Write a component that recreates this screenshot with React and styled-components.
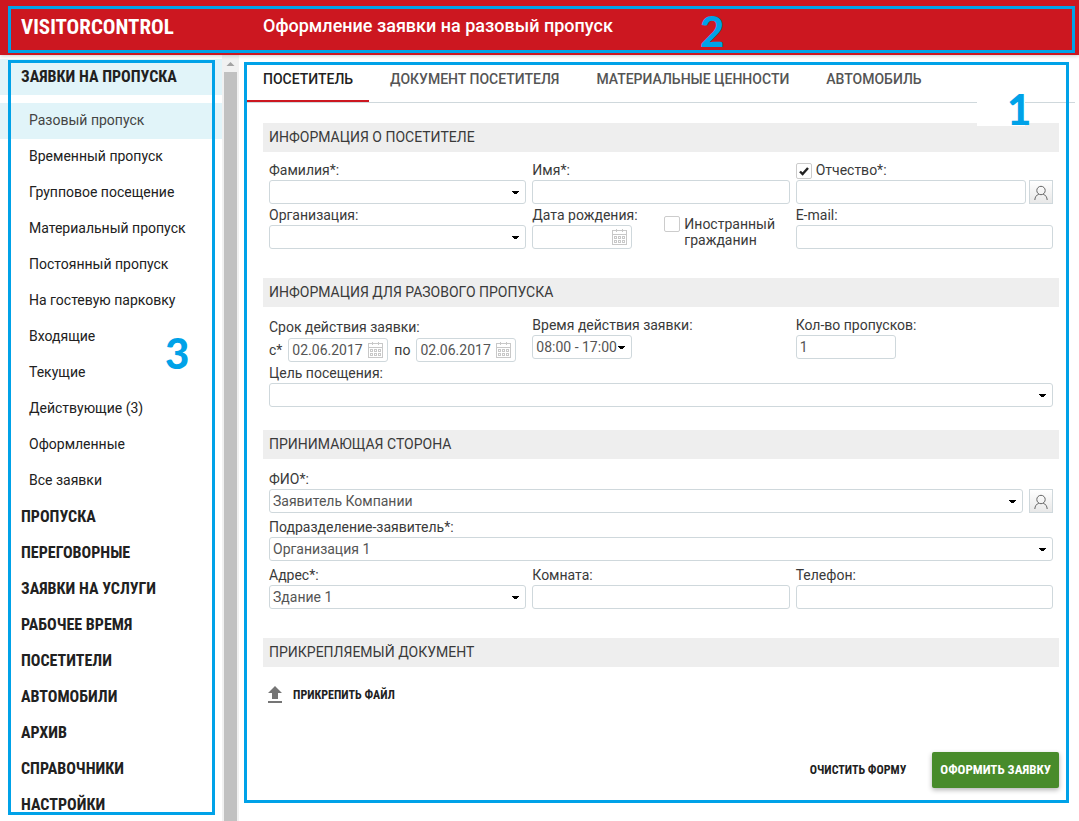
import React, { useState } from 'react';
import styled, { createGlobalStyle } from 'styled-components';

const GlobalStyle = createGlobalStyle`
  * {
    box-sizing: border-box;
  }

  body {
    margin: 0;
    background: #fff;
    color: #3a3a3a;
    font: 14px/20px Roboto, sans-serif;
  }

  button, input, select {
    font: inherit;
    color: inherit;
  }
`;

const condensed = '"Roboto Condensed", Roboto, sans-serif';

const Page = styled.div`
  display: flex;
  flex-direction: column;
  height: 100vh;
  overflow: hidden;
`;

const Header = styled.header`
  position: relative;
  z-index: 1;
  display: flex;
  align-items: center;
  flex: none;
  height: 55px;
  padding: 0 21px 2px;
  background: #cc1720;
  color: #fff;
  box-shadow: 0 1px 4px rgba(0, 0, 0, 0.2);
`;

const Logo = styled.a`
  width: 242px;
  color: inherit;
  font: 700 21px/24px ${condensed};
  text-decoration: none;
`;

const Title = styled.h1`
  margin: 0;
  padding-bottom: 2px;
  font-size: 18px;
  line-height: 24px;
  font-weight: 500;
`;

const Body = styled.div`
  display: flex;
  flex: 1;
  min-height: 0;
`;

const Sidebar = styled.nav`
  position: relative;
  flex: none;
  width: 222px;
  padding-top: 4px;
  overflow: hidden;
`;

const Group = styled.a`
  display: block;
  padding: 0 21px;
  color: #212121;
  background: ${({ $active }) => ($active ? '#e1f4f9' : 'transparent')};
  font: 700 16px/36px ${condensed};
  text-decoration: none;
`;

const SubMenu = styled.div`
  padding-top: 8px;
`;

const SubItem = styled.a`
  display: block;
  padding: 0 29px 2px;
  color: ${({ $active }) => ($active ? '#444' : '#212121')};
  background: ${({ $active }) => ($active ? '#e1f4f9' : 'transparent')};
  line-height: 34px;
  text-decoration: none;
`;

const ScrollTrack = styled.div`
  display: flex;
  flex-direction: column;
  flex: none;
  width: 17px;
  padding: 0 2px;
  background: #f1f1f1;

  svg {
    flex: none;
    margin: 6px 2px 5px;
  }
`;

const ScrollThumb = styled.div`
  flex: 1;
  background: #c1c1c1;
`;

const Main = styled.main`
  position: relative;
  flex: 1;
  min-width: 0;
  padding: 0 20px 0 24px;
`;

const Tabs = styled.div`
  display: flex;
  gap: 5px;
  margin: 0 -16px 20px;
  border-bottom: 1px solid #cfd8dc;
`;

const Tab = styled.button`
  height: 47px;
  padding: 0 16px;
  border: 0;
  border-top: 2px solid transparent;
  border-bottom: 2px solid ${({ $active }) => ($active ? '#cc1720' : 'transparent')};
  background: none;
  color: ${({ $active }) => ($active ? '#212121' : '#555')};
  font-weight: 500;
  white-space: nowrap;
`;

const Section = styled.section`
  margin-bottom: ${({ $tight }) => ($tight ? '23px' : '29px')};
`;

const SectionTitle = styled.h2`
  margin: 0;
  padding: 0 6px;
  background: #eee;
  font-size: 14px;
  line-height: 29px;
  font-weight: 400;
`;

const Grid = styled.div`
  display: grid;
  grid-template-columns: repeat(3, minmax(0, 1fr));
  gap: ${({ $loose }) => ($loose ? '4px 6px' : '1px 6px')};
  align-items: start;
  padding: ${({ $loose }) => ($loose ? '10px 6px 0' : '8px 6px 0')};
`;

const Cell = styled.div`
  display: flex;
  flex-direction: column;
  grid-column: ${({ $wide }) => ($wide ? '1 / -1' : 'auto')};
  gap: ${({ $lowered }) => ($lowered ? '1px' : '0')};
  width: ${({ $short }) => ($short ? '100px' : 'auto')};
  padding-top: ${({ $lowered }) => ($lowered ? '2px' : '0')};
`;

const Split = styled.div`
  display: flex;
  gap: 32px;
`;

const Label = styled.label`
  display: flex;
  align-items: center;
  gap: 4px;
  white-space: nowrap;
`;

const Line = styled.div`
  display: flex;
  align-items: center;
  gap: ${({ $gap }) => $gap || 6}px;
`;

const Control = styled.div`
  position: relative;
  flex: ${({ $short }) => ($short ? 'none' : '1 1 auto')};
  width: ${({ $short }) => ($short ? '100px' : 'auto')};
  height: 24px;

  > svg {
    position: absolute;
    top: 11px;
    right: 7px;
    pointer-events: none;
  }
`;

const Input = styled.input`
  display: block;
  width: 100%;
  height: 24px;
  padding: 0 3px;
  border: 1px solid #cfd8dc;
  border-radius: 3px;
  background: #fff;
  color: #555;
  outline: none;
`;

const SelectBox = styled(Input).attrs({ as: 'select' })`
  appearance: none;
`;

const CalendarButton = styled.button`
  position: absolute;
  top: 4px;
  right: 5px;
  display: flex;
  padding: 0;
  border: 0;
  background: none;
`;

const UserButton = styled.button`
  display: flex;
  align-items: center;
  justify-content: center;
  flex: none;
  width: 24px;
  height: 24px;
  padding: 2px 1px 0 0;
  border: 1px solid #cfd8dc;
  background: linear-gradient(#fff, #e8e8e8);
`;

const Check = styled.input`
  appearance: none;
  flex: none;
  width: 16px;
  height: 16px;
  margin: 0;
  border: 1px solid #ccc;
  border-radius: 2px;
  background: #fff;
`;

const CheckWrap = styled.span`
  position: relative;
  display: flex;
  align-self: flex-start;

  svg {
    position: absolute;
    top: 4px;
    left: 3px;
    pointer-events: none;
  }
`;

const PatronymicLabel = styled(Label)`
  ${CheckWrap} {
    align-self: flex-end;
    padding-bottom: 1px;
  }
`;

const ForeignLabel = styled.label`
  display: flex;
  gap: 4px;
  padding-top: 11px;
  line-height: 16px;
`;

const AttachButton = styled.button`
  display: flex;
  align-items: center;
  gap: 6px;
  margin-top: 16px;
  padding: 0;
  border: 0;
  background: none;
  color: #212121;
  font: 700 12px/24px ${condensed};
`;

const Actions = styled.div`
  display: flex;
  justify-content: flex-end;
  gap: 18px;
  margin-top: 45px;
`;

const ActionButton = styled.button`
  height: 36px;
  padding: 0 8px;
  border: 0;
  border-radius: 2px;
  background: ${({ $primary }) => ($primary ? '#488b2b' : 'none')};
  color: ${({ $primary }) => ($primary ? '#fff' : '#212121')};
  box-shadow: ${({ $primary }) => ($primary ? '0 2px 5px rgba(0, 0, 0, 0.3)' : 'none')};
  font: 700 ${({ $primary }) => ($primary ? '13px' : '12px')}/36px ${condensed};
  white-space: nowrap;
`;

// callout frames lying over the three page areas
const Frame = styled.div`
  position: absolute;
  inset: ${({ $inset }) => $inset};
  border: 3px solid #00a2e8;
  pointer-events: none;
`;

const Marker = styled.span`
  position: absolute;
  top: ${({ $top }) => $top}px;
  right: ${({ $right }) => $right}px;
  width: 24px;
  color: #00a2e8;
  font: 900 42px/34px Lato, sans-serif;
  text-align: center;
`;

const MarkerPatch = styled.div`
  position: absolute;
  top: 37px;
  right: 54px;
  width: 48px;
  height: 34px;
  background: #fff;
`;

const Caret = () => (
  <svg width="7" height="3" viewBox="0 0 7 3" shapeRendering="crispEdges" aria-hidden="true">
    <path d="M0 0h7v1H6v1H5v1H2V2H1V1H0z" fill="#000" />
  </svg>
);

const CalendarIcon = () => (
  <svg width="15" height="16" viewBox="0 0 15 16" fill="none" stroke="#c8c8c8" shapeRendering="crispEdges" aria-hidden="true">
    <path d="M.5 1.5h14v14H.5zM.5 5.5h14M4.5 0v3M10.5 0v3" />
    <path d="M2.5 7.5h2v2h-2zM6.5 7.5h2v2h-2zM10.5 7.5h2v2h-2zM2.5 11.5h2v2h-2zM6.5 11.5h2v2h-2zM10.5 11.5h2v2h-2z" />
  </svg>
);

const UserIcon = () => (
  <svg width="14" height="16" viewBox="0 0 14 16" fill="none" stroke="#666" aria-hidden="true">
    <circle cx="7" cy="5.5" r="4.2" />
    <path d="M.8 15c.2-3 1.7-5 4-5.8M13.2 15c-.2-3-1.7-5-4-5.8" />
  </svg>
);

const CheckIcon = () => (
  <svg width="10" height="9" viewBox="0 0 10 9" fill="none" stroke="#222" strokeWidth="2.4" aria-hidden="true">
    <path d="M1 4.5l2.6 2.6L9 1" />
  </svg>
);

const UploadIcon = () => (
  <svg width="24" height="24" viewBox="0 0 24 24" fill="#757575" aria-hidden="true">
    <path d="M9 16h6v-6h4l-7-7-7 7h4zM5 18h14v2H5z" />
  </svg>
);

const Select = ({ id, value = '', short }) => (
  <Control $short={short}>
    <SelectBox id={id} defaultValue={value}>
      <option value={value}>{value}</option>
    </SelectBox>
    <Caret />
  </Control>
);

const DateInput = ({ id, value }) => (
  <Control $short>
    <Input id={id} defaultValue={value} />
    <CalendarButton type="button" aria-label="Календарь"><CalendarIcon /></CalendarButton>
  </Control>
);

const Field = ({ id, label, wide, short, children }) => (
  <Cell $wide={wide} $short={short}>
    <Label htmlFor={id}>{label}</Label>
    {children}
  </Cell>
);

const CheckBox = ({ checked, onChange }) => (
  <CheckWrap>
    <Check type="checkbox" checked={checked} onChange={onChange} />
    {checked && <CheckIcon />}
  </CheckWrap>
);

const requests = [
  'Разовый пропуск',
  'Временный пропуск',
  'Групповое посещение',
  'Материальный пропуск',
  'Постоянный пропуск',
  'На гостевую парковку',
  'Входящие',
  'Текущие',
  'Действующие (3)',
  'Оформленные',
  'Все заявки',
];

const groups = [
  'ПРОПУСКА',
  'ПЕРЕГОВОРНЫЕ',
  'ЗАЯВКИ НА УСЛУГИ',
  'РАБОЧЕЕ ВРЕМЯ',
  'ПОСЕТИТЕЛИ',
  'АВТОМОБИЛИ',
  'АРХИВ',
  'СПРАВОЧНИКИ',
  'НАСТРОЙКИ',
];

const tabs = ['ПОСЕТИТЕЛЬ', 'ДОКУМЕНТ ПОСЕТИТЕЛЯ', 'МАТЕРИАЛЬНЫЕ ЦЕННОСТИ', 'АВТОМОБИЛЬ'];

const App = () => {
  const [tab, setTab] = useState(0);
  const [hasPatronymic, setHasPatronymic] = useState(true);
  const [foreign, setForeign] = useState(false);

  return (
    <Page>
      <GlobalStyle />
      <Header>
        <Logo href="#">VISITORCONTROL</Logo>
        <Title>Оформление заявки на разовый пропуск</Title>
        <Frame $inset="6px 4px 2px 8px" />
        <Marker $top={14} $right={355}>2</Marker>
      </Header>
      <Body>
        <Sidebar>
          <Group href="#" $active>ЗАЯВКИ НА ПРОПУСКА</Group>
          <SubMenu>
            {requests.map((name, i) => (
              <SubItem key={name} href="#" $active={i === 0}>{name}</SubItem>
            ))}
          </SubMenu>
          {groups.map((name) => <Group key={name} href="#">{name}</Group>)}
          <Frame $inset="5px 7px 6px 8px" />
          <Marker $top={281} $right={33}>3</Marker>
        </Sidebar>
        <ScrollTrack>
          <svg width="9" height="6" viewBox="0 0 9 6" fill="#a3a3a3" aria-hidden="true">
            <path d="M4.5 1L8.5 5h-8z" />
          </svg>
          <ScrollThumb />
        </ScrollTrack>
        <Main>
          <Tabs role="tablist">
            {tabs.map((name, i) => (
              <Tab key={name} role="tab" aria-selected={tab === i} $active={tab === i} onClick={() => setTab(i)}>
                {name}
              </Tab>
            ))}
          </Tabs>

          <Section>
            <SectionTitle>ИНФОРМАЦИЯ О ПОСЕТИТЕЛЕ</SectionTitle>
            <Grid>
              <Field id="surname" label="Фамилия*:"><Select id="surname" /></Field>
              <Field id="name" label="Имя*:"><Input id="name" /></Field>
              <Cell>
                <PatronymicLabel>
                  <CheckBox checked={hasPatronymic} onChange={() => setHasPatronymic(!hasPatronymic)} />
                  Отчество*:
                </PatronymicLabel>
                <Line $gap={3}>
                  <Input aria-label="Отчество" />
                  <UserButton type="button" aria-label="Выбрать посетителя"><UserIcon /></UserButton>
                </Line>
              </Cell>
              <Field id="org" label="Организация:"><Select id="org" /></Field>
              <Split>
                <Field id="birth" label="Дата рождения:" short><DateInput id="birth" /></Field>
                <ForeignLabel>
                  <CheckBox checked={foreign} onChange={() => setForeign(!foreign)} />
                  Иностранный гражданин
                </ForeignLabel>
              </Split>
              <Field id="email" label="E-mail:"><Input id="email" /></Field>
            </Grid>
          </Section>

          <Section $tight>
            <SectionTitle>ИНФОРМАЦИЯ ДЛЯ РАЗОВОГО ПРОПУСКА</SectionTitle>
            <Grid>
              <Cell $lowered>
                <Label as="span">Срок действия заявки:</Label>
                <Line>
                  <label htmlFor="from">с*</label>
                  <DateInput id="from" value="02.06.2017" />
                  <label htmlFor="to">по</label>
                  <DateInput id="to" value="02.06.2017" />
                </Line>
              </Cell>
              <Field id="time" label="Время действия заявки:"><Select id="time" value="08:00 - 17:00" short /></Field>
              <Field id="count" label="Кол-во пропусков:">
                <Control $short><Input id="count" defaultValue="1" /></Control>
              </Field>
              <Field id="purpose" label="Цель посещения:" wide><Select id="purpose" /></Field>
            </Grid>
          </Section>

          <Section>
            <SectionTitle>ПРИНИМАЮЩАЯ СТОРОНА</SectionTitle>
            <Grid $loose>
              <Field id="host" label="ФИО*:" wide>
                <Line>
                  <Select id="host" value="Заявитель Компании" />
                  <UserButton type="button" aria-label="Выбрать заявителя"><UserIcon /></UserButton>
                </Line>
              </Field>
              <Field id="unit" label="Подразделение-заявитель*:" wide><Select id="unit" value="Организация 1" /></Field>
              <Field id="address" label="Адрес*:"><Select id="address" value="Здание 1" /></Field>
              <Field id="room" label="Комната:"><Input id="room" /></Field>
              <Field id="phone" label="Телефон:"><Input id="phone" /></Field>
            </Grid>
          </Section>

          <SectionTitle>ПРИКРЕПЛЯЕМЫЙ ДОКУМЕНТ</SectionTitle>
          <AttachButton type="button"><UploadIcon />ПРИКРЕПИТЬ ФАЙЛ</AttachButton>

          <Actions>
            <ActionButton type="reset">ОЧИСТИТЬ ФОРМУ</ActionButton>
            <ActionButton type="submit" $primary>ОФОРМИТЬ ЗАЯВКУ</ActionButton>
          </Actions>

          <MarkerPatch />
          <Frame $inset="7px 10px 18px 5px" />
          <Marker $top={37} $right={48}>1</Marker>
        </Main>
      </Body>
    </Page>
  );
};

export default App;
